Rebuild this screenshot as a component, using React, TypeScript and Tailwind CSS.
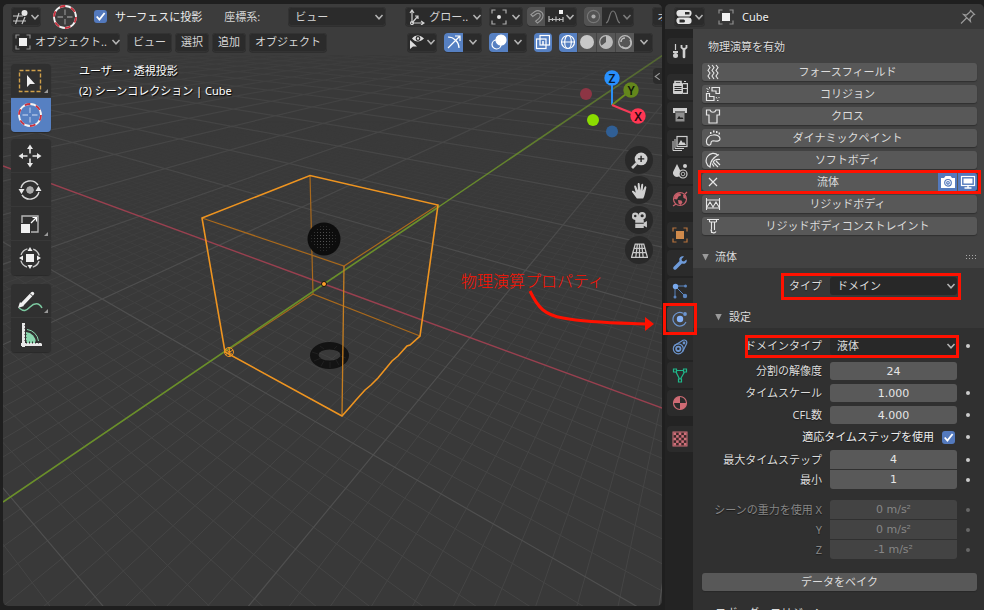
import React, { useId, useState } from "react";
import type { ReactNode } from "react";

const UI = "font-['Noto_Sans','Noto_Sans_CJK_JP',sans-serif]";
const NUM = "font-['DejaVu_Sans','Noto_Sans_CJK_JP',sans-serif]";

/* ---------- small building blocks ---------- */

function Icon({ children, className = "", size = "size-4", box = "0 0 16 16" }: { children: ReactNode; className?: string; size?: string; box?: string }) {
  return (
    <svg viewBox={box} aria-hidden="true" className={`${size} shrink-0 ${className}`} fill="none" stroke="currentColor" strokeWidth="1.2">
      {children}
    </svg>
  );
}

function Chevron({ className = "" }: { className?: string }) {
  return (
    <svg viewBox="0 0 10 8" aria-hidden="true" className={`h-2 w-[10px] shrink-0 text-[#b4b4b4] ${className}`} fill="none" stroke="currentColor" strokeWidth="1.5">
      <path d="M1.5 2 5 5.8 8.5 2" />
    </svg>
  );
}

function Check({ id, label }: { id: string; label?: string }) {
  const [on, setOn] = useState(true);
  return (
    <span className="relative flex size-[13px] shrink-0">
      <input id={id} aria-label={label} type="checkbox" checked={on} onChange={() => setOn(!on)} className="peer size-[13px] appearance-none rounded-[3px] bg-[#545454] checked:bg-[#5379bd]" />
      <svg viewBox="0 0 12 12" aria-hidden="true" className="pointer-events-none absolute inset-0 hidden size-[13px] peer-checked:block" fill="none" stroke="#fff" strokeWidth="1.7">
        <path d="M2.5 6 5 8.8 9.8 2.8" />
      </svg>
    </span>
  );
}

function Highlight({ className }: { className: string }) {
  return <span aria-hidden="true" className={`pointer-events-none absolute z-20 border-[3px] border-[#ff1100] ${className}`} />;
}

const ObjectMark = ({ color = "#f0f0f0" }: { color?: string }) => (
  <>
    <path d="M1 4.5V1h3.5M11.500 1H15v3.500M15 11.500V15h-3.500M4.500 15H1v-3.500" stroke="#8e8e8e" strokeWidth="1.2" />
    <rect x="4" y="4" width="8" height="8" fill={color} stroke="none" />
  </>
);

/* ---------- 3D scene ---------- */

const ORIGIN = [324, 284];
const VANISH_X = [-404, 8];
const VANISH_Y = [746, 3];
const STEP_X = 0.0166;
const STEP_Y = 0.0214;

function project(u: number, v: number) {
  const a = STEP_X * u;
  const b = STEP_Y * v;
  const w = 1 + a + b;
  return [(ORIGIN[0] + a * VANISH_X[0] + b * VANISH_Y[0]) / w, (ORIGIN[1] + a * VANISH_X[1] + b * VANISH_Y[1]) / w];
}

function gridPath(major: boolean) {
  const near = 0.28;
  let d = "";
  const limit = major ? 200 : 80;
  for (let i = -60; i <= limit; i++) {
    if (i === 0 || (i % 10 === 0) !== major) continue;
    const ends = [
      [project((near - 1 - STEP_Y * i) / STEP_X, i), project(600, i)],
      [project(i, (near - 1 - STEP_X * i) / STEP_Y), project(i, 600)],
    ];
    for (const [p, q] of ends) d += `M${p[0].toFixed(1)} ${p[1].toFixed(1)}L${q[0].toFixed(1)} ${q[1].toFixed(1)}`;
  }
  return d;
}

const MINOR = gridPath(false);
const MAJOR = gridPath(true);

function Scene() {
  const dots: ReactNode[] = [];
  for (let r = -4; r <= 4; r++)
    for (let c = -4; c <= 4; c++)
      if (r * r + c * c < 18) dots.push(<rect key={`${r},${c}`} x={323 + c * 3} y={238 + r * 3} width="1" height="1" fill="#5a5a5a" opacity={1 - (r * r + c * c) / 26} />);
  return (
    <svg role="img" aria-label="3D scene" className="absolute top-0 left-0 h-[610px] w-[1600px]" viewBox="3 4 1600 610" fill="none">
      <defs>
        <linearGradient id="fadeMinor" gradientUnits="userSpaceOnUse" x1="0" y1="120" x2="0" y2="420">
          <stop offset="0" stopColor="#fff" stopOpacity="0" />
          <stop offset="0.35" stopColor="#fff" stopOpacity="0.4" />
          <stop offset="1" stopColor="#fff" />
        </linearGradient>
        <linearGradient id="fadeMajor" gradientUnits="userSpaceOnUse" x1="0" y1="30" x2="0" y2="300">
          <stop offset="0" stopColor="#fff" stopOpacity="0" />
          <stop offset="0.3" stopColor="#fff" stopOpacity="0.5" />
          <stop offset="1" stopColor="#fff" />
        </linearGradient>
        <linearGradient id="fadeAxis" gradientUnits="userSpaceOnUse" x1="662" y1="56" x2="440" y2="206">
          <stop offset="0" stopColor="#6a8f2a" stopOpacity="0.5" />
          <stop offset="1" stopColor="#6a8f2a" />
        </linearGradient>
        <mask id="minorMask"><rect x="0" y="0" width="1700" height="700" fill="url(#fadeMinor)" /></mask>
        <mask id="majorMask"><rect x="0" y="0" width="1700" height="700" fill="url(#fadeMajor)" /></mask>
      </defs>
      <path d={MINOR} stroke="#454545" mask="url(#minorMask)" />
      <path d={MAJOR} stroke="#4f4f4f" strokeWidth="1.2" mask="url(#majorMask)" />
      <path d="M3 166 324 284 1600 752" stroke="#98404f" strokeWidth="1.4" />
      {/* back edges of the domain */}
      <g stroke="#a9691c" strokeWidth="1.2">
        <path d="M310 175 313 294 420 336M313 294 225 352M202 218 344 266 438 205" />
      </g>
      <circle cx="324" cy="239" r="16.500" fill="#0d0d0d" />
      {dots}
      <path fillRule="evenodd" fill="#131313" d="M310 355.500a19.500 13.500 0 1 0 39 0a19.500 13.500 0 1 0-39 0ZM318.500 355a11 5.500 0 1 1 22 0a11 5.500 0 1 1-22 0Z" />
      <path d="M312 352l6 2M314 361l7-3M321 366l3-5M330 368v-6M339 365l-3-5M346 358l-6-2M320 346l4 3M337 346l-3 3" stroke="#202020" strokeWidth="1" />
      <path d="M3 502 324 284 440 206" stroke="#6a8f2a" strokeWidth="1.600" />
      <path d="M440 206 740 3" stroke="url(#fadeAxis)" strokeWidth="1.500" />
      <path d="M344 266 342 416" stroke="#c67e20" strokeWidth="1.300" />
      <path d="M342 416 225 352 202 218 310 175.500 438 205 420 336 410 345 407 346 398 356 392 361 378 378 371 385 365 390 356 400 350 407Z" stroke="#ee9420" strokeWidth="1.600" />
      <g stroke="#ee9420" strokeWidth="1"><circle cx="229" cy="352" r="4.500" /><path d="m225 349 8 6M229 347l1 10M225 355l8-5" /></g>
      <circle cx="324" cy="284" r="2.500" fill="#ffa02a" stroke="#111" />
      {/* call-out arrow */}
      <path d="M530 291C538 308 545 315 563 318C590 323 620 323 647 324" stroke="#ff1100" strokeWidth="3" />
      <path d="M645 317 654 324 645 331Z" fill="#ff1100" />
    </svg>
  );
}

function AxisGizmo() {
  return (
    <svg role="img" aria-label="View axes" viewBox="576 66 72 74" className="h-[74px] w-[72px]" fontSize="12" fontFamily="'Noto Sans',sans-serif" fontWeight="600" textAnchor="middle">
      <g strokeWidth="2">
        <path d="M612 105V84" stroke="#2a8df5" /><path d="M612 105 626 94" stroke="#6a8c1e" /><path d="m612 105 22 9" stroke="#f63a57" />
      </g>
      <circle cx="586" cy="94" r="6" fill="#8d3544" /><circle cx="593" cy="120" r="6" fill="#8bdc00" /><circle cx="612" cy="131.500" r="6" fill="#305f95" />
      <circle cx="612" cy="78" r="7.700" fill="#2890ff" /><circle cx="631" cy="90" r="7.700" fill="#64871c" /><circle cx="638" cy="116" r="7.700" fill="#ff3653" />
      <text x="612" y="82.500" fill="#0a1a2e">Z</text><text x="631" y="94.500" fill="#10180a">Y</text><text x="638" y="120.500" fill="#2a0a10">X</text>
    </svg>
  );
}

/* ---------- viewport header ---------- */

const box = "flex h-[19px] shrink-0 items-center rounded-[4px] bg-[#2b2b2b] shadow-[0_1px_0_#2f2f2f,inset_0_0_0_1px_#333]";
const cell = "flex h-[19px] items-center justify-center";

function CursorIcon({ big = false }: { big?: boolean }) {
  return (
    <svg viewBox="0 0 26 26" aria-hidden="true" className="size-[26px] shrink-0" fill="none" strokeWidth="1.800">
      <circle cx="13" cy="13" r="11" stroke="#f2f2f2" />
      <circle cx="13" cy="13" r="11" stroke="#c9303e" strokeDasharray="5.760" />
      <path d="M13 5.500V11M13 15v5.500M5.500 13H11M15 13h5.500" stroke={big ? "#a9bfe4" : "#8a8a8a"} strokeWidth="1.300" />
    </svg>
  );
}

function HeaderRowOne() {
  const cb = useId();
  const cs = useId();
  return (
    <div className="flex h-[25px] items-center pl-2">
      <button aria-label="エディタータイプ" className={`${box} w-[30px] justify-center gap-px`}>
        <Icon className="text-[#c6c6c6]"><path d="M0 7h10M0 12h13M6 4 2.500 15M12 8l-3 7" /><circle cx="11.500" cy="4" r="3" fill="#e4e4e4" stroke="none" /></Icon>
        <Chevron />
      </button>
      <span className="ml-[11px] flex shrink-0"><CursorIcon /></span>
      <span className="ml-4 flex shrink-0 items-center gap-2"><Check id={cb} /><label htmlFor={cb} className="text-[#eee]">サーフェスに投影</label></span>
      <label htmlFor={cs} className="ml-[22px] shrink-0">座標系:</label>
      <span className="relative ml-7 flex shrink-0 items-center">
        <select id={cs} className={`${box} w-[98px] appearance-none pl-[7px]`}><option>ビュー</option></select>
        <Chevron className="pointer-events-none absolute right-[2px]" />
      </span>
      <button className={`${box} ml-[19px] w-[77px] gap-1 pl-1`}>
        <Icon className="text-[#d0d0d0]"><path d="M3 14V2M1 4l2-3 2 3M3 14h11M12 12l3 2-3 2M3 14 9 7M6 7h3v3" /><circle cx="3" cy="14" r="1.500" /></Icon>
        グロー..<Chevron className="mr-px ml-auto" />
      </button>
      <button aria-label="ピボットポイント" className={`${box} ml-[7px] w-[34px] justify-center gap-1`}>
        <Icon className="text-[#b0b0b0]"><path d="M1 4.500V1h3.500M11.500 1H15v3.500M15 11.500V15h-3.500M4.500 15H1v-3.500" /><circle cx="8" cy="8" r="2" fill="#e6e6e6" stroke="none" /></Icon>
        <Chevron />
      </button>
      <span className={`${box} ml-1 w-[50px] overflow-hidden`}>
        <button aria-label="スナップ" className={`${cell} w-[18px] bg-[#525252]`}>
          <Icon className="text-[#9a9a9a]" size="size-[15px]"><path d="M2 6 6 3C10 0 15 3 15 7c0 3-3 6-6 8l-2-2c3-2 5-4 5-6 0-2-2-3-4-2L4 8Z" /></Icon>
        </button>
        <button aria-label="スナップ対象" className={`${cell} flex-1`}>
          <Icon className="text-[#b9b9b9]"><path d="M1 7v6M15 8v5M1 10.500h14M4.500 9v3M8 7.500v5M11.500 9v3" /><rect x="11" y="1" width="4" height="4" fill="#eee" stroke="none" /></Icon>
          <Chevron className="ml-px" />
        </button>
      </span>
      <span className={`${box} ml-[7px] w-[50px] overflow-hidden`}>
        <button aria-label="プロポーショナル編集" className={`${cell} w-[18px] bg-[#525252]`}>
          <Icon className="text-[#777]" size="size-[15px]"><circle cx="8" cy="8" r="6.500" /><circle cx="8" cy="8" r="2.200" fill="#aaa" stroke="none" /></Icon>
        </button>
        <button aria-label="減衰" className={`${cell} flex-1 gap-px opacity-60`}>
          <Icon className="text-[#aaa]"><path d="M1 14c4-1 3-12 7-12s3 11 7 12" /></Icon><Chevron />
        </button>
      </span>
      <button className={`${box} ml-[18px] w-[66px] pl-[5px]`}>オプション</button>
    </div>
  );
}

function HeaderRowTwo() {
  const blue = "bg-[#5680c2] text-white";
  return (
    <div className="flex h-[26px] items-center pr-[9px] pl-2">
      <button className={`${box} ml-px w-[108px] gap-[4px] pl-[3px]`}>
        <Icon><ObjectMark /></Icon>オブジェクト..<Chevron className="mr-px ml-auto" />
      </button>
      <nav className="ml-[7px] flex gap-[3px]">
        {["ビュー", "選択", "追加"].map((t) => <button key={t} className={`${box} px-[6px]`}>{t}</button>)}
        <button className={`${box} px-[6px]`}>オブジェクト</button>
      </nav>
      <div className="ml-auto flex items-center gap-[7px]">
        <button aria-label="表示対象" className={`${box} w-[30px] justify-center gap-px`}>
          <Icon className="text-[#ddd]"><path d="M3 4.500C6 .5 11 .5 15 4.500c-4 4-9 4-12 0Z" fill="#ddd" stroke="none" /><circle cx="9" cy="4.500" r="1.800" stroke="#2b2b2b" fill="none" /><path d="M1 6v9l3-2.500h4Z" fill="#ddd" stroke="none" /></Icon><Chevron />
        </button>
        <span className={`${box} overflow-hidden`}>
          <button aria-label="ギズモ" className={`${cell} w-[19px] ${blue}`}><Icon><path d="M2 14 13.500 2.500M9 2h5v5M2 3c6 0 11 5 11 11" /></Icon></button>
          <button aria-label="ギズモ設定" className={`${cell} w-[19px]`}><Chevron /></button>
        </span>
        <span className={`${box} overflow-hidden`}>
          <button aria-label="オーバーレイ" className={`${cell} w-[19px] ${blue}`}><Icon><circle cx="10" cy="6" r="5" fill="#fff" /><circle cx="5.500" cy="10.500" r="4.500" fill="#5680c2" /><path d="M5 6a5 5 0 0 0 5 5 4.500 4.500 0 0 0-5-5Z" fill="#fff" /></Icon></button>
          <button aria-label="オーバーレイ設定" className={`${cell} w-[19px]`}><Chevron /></button>
        </span>
        <button aria-label="透過表示" className={`${cell} w-[18px] rounded-[4px] ${blue}`}><Icon><rect x="5" y="1.500" width="9.500" height="9.500" /><rect x="1.500" y="5" width="9.500" height="9.500" /><path d="M8 7v4" strokeWidth="1.500" /></Icon></button>
        <span className={`${box} overflow-hidden`}>
          <button aria-label="ワイヤーフレーム" className={`${cell} w-[18px] ${blue}`}><Icon><circle cx="8" cy="8" r="6.500" /><ellipse cx="8" cy="8" rx="3.300" ry="6.500" /><path d="M1.500 8h13" /></Icon></button>
          <button aria-label="ソリッド" className={`${cell} w-[19px] border-l border-[#444] bg-[#565656]`}><Icon><circle cx="8" cy="8" r="7" fill="#c8c8c8" stroke="none" /></Icon></button>
          <button aria-label="マテリアルプレビュー" className={`${cell} w-[19px] border-l border-[#444] bg-[#565656] text-[#bbb]`}><Icon><circle cx="8" cy="8" r="6.300" /><path d="M8 8V1.700A6.300 6.300 0 0 1 14.300 8ZM8 8l-5 4A6.300 6.300 0 0 0 14.300 8Z" fill="#bbb" stroke="none" /></Icon></button>
          <button aria-label="レンダー" className={`${cell} w-[19px] border-l border-[#444] bg-[#565656] text-[#bbb]`}><Icon><circle cx="8" cy="8" r="6.300" /><path d="M13 6a5 5 0 0 1-8 6.500M4 8a4 4 0 0 1 4-4" strokeWidth="1.600" /></Icon></button>
          <button aria-label="シェーディング設定" className={`${cell} w-[19px]`}><Chevron /></button>
        </span>
      </div>
    </div>
  );
}

/* ---------- toolbar ---------- */

const more = <span aria-hidden="true" className="absolute right-[3px] bottom-1 size-1 bg-[#999] [clip-path:polygon(100%_0,100%_100%,0_100%)]" />;

function Tool({ label, children, active = false, menu = false }: { label: string; children: ReactNode; active?: boolean; menu?: boolean }) {
  return (
    <button aria-label={label} className={`relative flex h-[34px] w-10 items-center justify-center border-b border-[#383838] pr-[2px] last:border-0 ${active ? "bg-[#5680c2]" : "bg-[#303030]"}`}>
      {children}
      {menu && more}
    </button>
  );
}

function Toolbar() {
  const group = "overflow-hidden rounded-[4px] shadow-[0_1px_1px_#2a2a2a]";
  return (
    <div className="relative ml-2 w-10 pt-[9px]">
      <div className={group}>
        <Tool label="選択" menu>
          <Icon size="size-6" box="0 0 24 24"><rect x="1.500" y="1.500" width="21" height="21" stroke="#d0a04a" strokeDasharray="4 2" strokeWidth="1.400" /><path d="M9 6v12l3-3h5Z" fill="#f0f0f0" stroke="none" /></Icon>
        </Tool>
        <Tool label="カーソル" active><CursorIcon big /></Tool>
      </div>
      <div className={`mt-[7px] ${group}`}>
        <Tool label="移動">
          <Icon size="size-6" box="0 0 24 24" className="text-[#e8e8e8]"><path d="M12 5v4.500M12 14.500V19M5 12h4.500M14.500 12H19" strokeWidth="1.600" /><path d="M12 .5 15 5H9ZM12 23.500 15 19H9ZM.5 12 5 9v6ZM23.500 12 19 9v6Z" fill="#e8e8e8" stroke="none" /></Icon>
        </Tool>
        <Tool label="回転">
          <Icon size="size-6" box="0 0 24 24" className="text-[#d8d8d8]"><path d="M3 10A9.500 9.500 0 0 1 20 7M21 14A9.500 9.500 0 0 1 4 17" strokeWidth="1.400" /><path d="M.5 11h6L3.500 16ZM17.500 13h6L20.500 8Z" fill="#e8e8e8" stroke="none" /><path d="m12 8 2.800 1.200L16 12l-1.200 2.800L12 16l-2.800-1.200L8 12l1.200-2.800Z" fill="#aaa" stroke="none" /></Icon>
        </Tool>
        <Tool label="スケール" menu>
          <Icon size="size-6" box="0 0 24 24" className="text-[#b5b5b5]"><path d="M4 11V4h16v16h-7" strokeWidth="1.400" /><path d="m13 11 5-5M14.500 5.500H18.500V9.500" stroke="#fff" /><rect x="3" y="12" width="9" height="9" fill="#f0f0f0" stroke="none" /></Icon>
        </Tool>
        <Tool label="トランスフォーム">
          <Icon size="size-6" box="0 0 24 24" className="text-[#c8c8c8]"><circle cx="12" cy="12" r="9.500" strokeDasharray="9 5.920" strokeDashoffset="-3" strokeWidth="1.400" /><rect x="8" y="8" width="8" height="8" fill="#f0f0f0" stroke="none" /><path d="M12 1 14.500 5h-5ZM12 23l2.500-4h-5ZM1 12l4-2.500v5ZM23 12l-4-2.500v5Z" fill="#f0f0f0" stroke="none" /></Icon>
        </Tool>
      </div>
      <div className={`mt-[9px] ${group}`}>
        <Tool label="アノテート" menu>
          <Icon size="size-[26px]" box="0 0 26 26"><path d="M2 20c5 4 7 3 11-1s9-5 12 1" stroke="#7cc9a0" strokeWidth="1.500" /><path d="M5.500 16 15.500 5.500" stroke="#f0f0f0" strokeWidth="3.500" strokeLinecap="round" /><path d="m1 20 2-6 4 4Z" fill="#f0f0f0" stroke="none" /><path d="m13 5.500 3.500 3.500" stroke="#303030" strokeWidth="1" /></Icon>
        </Tool>
        <Tool label="計測">
          <Icon size="size-[26px]" box="0 0 26 26"><path d="M9 21V10a11 11 0 0 1 10 11Z" fill="#8ad6ae" stroke="none" /><path d="M10 7.500A13 13 0 0 1 21.500 19" stroke="#8ad6ae" strokeWidth="1" /><path d="M6.500 1v24M4 22.500h21" stroke="#e8e8e8" strokeWidth="3" /><path d="M8.500 3v18M9 20.500h16" stroke="#303030" strokeWidth="2" strokeDasharray="1 2" /></Icon>
        </Tool>
      </div>
    </div>
  );
}

const navButtons: [string, ReactNode][] = [
  ["ズーム", <><circle cx="9.500" cy="6.500" r="6" fill="#d0d0d0" stroke="none" /><path d="M5.500 10.500 1 15" strokeWidth="2.500" /><path d="M9.500 3.500v6M6.500 6.500h6" stroke="#222" strokeWidth="1.300" /></>],
  ["移動", <path key="p" d="M5.500 15.500 1 9.500c-.5-1 .5-1.800 1.500-1L4.500 10 3 4.500c-.2-1.400 1.500-1.600 1.900-.3L6.500 8 6.300 2c0-1.500 1.800-1.500 1.900 0L8.700 8l1-5.500c.3-1.400 1.900-1 1.800.3L11 8.500l1.700-3.800c.6-1.200 2-.5 1.700.7C13.500 9 13 13 11.500 15.500Z" fill="#d0d0d0" stroke="none" />],
  ["カメラ", <><path fillRule="evenodd" d="M1 3.500a3 3 0 0 1 6 0 3.500 3.500 0 0 1 7 0 3.500 3.500 0 0 1-3 3.500h1v3l3-1.500v6L12 13v2H4V7.500A3.500 3.500 0 0 1 1 3.500Z" fill="#c8c8c8" stroke="none" /><circle cx="4" cy="3.800" r="1.200" fill="#292929" stroke="none" /><circle cx="10.500" cy="3.500" r="1.500" fill="#292929" stroke="none" /><path d="M3 10.500h9" stroke="#292929" strokeWidth="1" /></>],
  ["投影切替", <path key="p" d="M4 2h8l3.500 12.500H.5ZM3 6h10M2 10h12M8 2v12.500M6 2 4.500 14.500M10 2l1.500 12.500" />],
];

function Viewport() {
  return (
    <main className="relative mb-1 flex min-w-0 flex-1 flex-col overflow-hidden rounded-[5px] bg-[#393939]">
      <Scene />
      <header className="relative flex h-[51px] flex-col bg-[#3c3c3c]/95 whitespace-nowrap text-[#d5d5d5]">
        <HeaderRowOne />
        <HeaderRowTwo />
      </header>
      <div className="relative flex">
        <Toolbar />
        <div className="mt-[6px] ml-7 leading-5 text-white [text-shadow:1px_1px_1px_#000]">
          <p>ユーザー・透視投影</p>
          <p>(2) シーンコレクション | Cube</p>
        </div>
        <div className="mt-[11px] ml-auto flex flex-col items-end">
          <div className="mr-[14px]"><AxisGizmo /></div>
          <div className="mt-[6px] mr-[9px] flex flex-col gap-[2px]">
            {navButtons.map(([l, i]) => (
              <button key={l} aria-label={l} className="flex size-[28px] items-center justify-center rounded-full bg-[#292929]">
                <Icon className="text-[#c8c8c8]" size="size-[17px]">{i}</Icon>
              </button>
            ))}
          </div>
        </div>
        <button aria-label="サイドバー" className="absolute top-[13px] right-0 flex h-4 w-[9px] items-center justify-center rounded-l-[4px] bg-[#2b2b2b] text-[#999]">
          <svg viewBox="0 0 6 8" className="h-[9px] w-[7px]" fill="none" stroke="currentColor"><path d="M5 1 1 4l4 3" /></svg>
        </button>
      </div>
      <p className="absolute top-[265px] left-[458px] text-[16px] leading-6 font-light whitespace-nowrap text-[#ff1100]">物理演算プロパティ</p>
    </main>
  );
}

/* ---------- properties editor ---------- */

const tabs: { label: string; icon: ReactNode; color: string; gap?: boolean; active?: boolean }[] = [
  { label: "ツール", color: "text-[#d0d0d0]", icon: <><path d="M3.500 1v6" strokeWidth="1.200" /><rect x="1" y="8" width="5" height="2" fill="currentColor" stroke="none" /><circle cx="3.500" cy="12.500" r="2.500" fill="currentColor" stroke="none" /><path d="M9.500 2v2.500L12 6.500l2.500-2V2" strokeWidth="1.800" /><path d="M12 6.500v7.500" strokeWidth="2.600" strokeLinecap="round" /></> },
  { label: "レンダー", gap: true, color: "text-[#cfcfcf]", icon: <><path d="M3 5V2.500h6V5" strokeWidth="1.600" /><rect x="1" y="4" width="10" height="11" rx="1" fill="currentColor" stroke="none" /><path d="M2.500 7.500h7M2.500 9.500h7M2.500 11.500h7" stroke="#2b2b2b" /><path d="M11 4.600h4.400v9.800H11M11 9.500h4.400M12 2.500h2" /></> },
  { label: "出力", color: "text-[#cfcfcf]", icon: <><path d="M1 1h14v5H1Z" fill="currentColor" stroke="none" /><path d="M3.500 6v8.500h9V6" fill="#8f8f8f" stroke="none" /><path d="m5 12 2-3 2 2 1-1 1.500 2Z" fill="#222" stroke="none" /><path d="M3 5h10" stroke="#2b2b2b" /></> },
  { label: "ビューレイヤー", color: "text-[#cfcfcf]", icon: <><rect x="5" y="1.500" width="10" height="10" /><path d="M3 4v9.500h9M1 6v9.500h9" strokeWidth="1" /><path d="m6 10 3-5 2 3 1-1 2 3Z" fill="currentColor" stroke="none" /></> },
  { label: "シーン", color: "text-[#cfcfcf]", icon: <><path d="M5 1 8.500 8A4 4 0 1 1 1.500 8Z" fill="currentColor" stroke="none" /><circle cx="13" cy="3" r="2" fill="currentColor" stroke="none" /><circle cx="11" cy="11" r="4" fill="#2b2b2b" stroke="currentColor" /><circle cx="11" cy="11" r="1.800" strokeWidth=".8" /></> },
  { label: "ワールド", color: "text-[#c9606b]", icon: <><circle cx="8" cy="8" r="6.500" /><path d="m2.500 5 3-3 3 .5.500 2-2.500 1L5 8.500 2 8ZM11 3.500l2.500 1L14 8l-2.500-1ZM6 9l3.500.5 1 2L8.500 14l-2-1.500Z" fill="currentColor" stroke="none" /><path d="m1 15 3-2M13 3l2-2" /></> },
  { label: "オブジェクト", gap: true, color: "text-[#b8733d]", icon: <><path d="M1 4.500V1h3.500M11.500 1H15v3.500M15 11.500V15h-3.500M4.500 15H1v-3.500" /><rect x="4" y="4" width="8" height="8" fill="#d08a4b" stroke="none" /></> },
  { label: "モディファイアー", color: "text-[#6f9bd9]", icon: <path d="M14.500 4.500 12 6.500 10 6l-.5-2L12 1.500C9 .5 6.500 3 7.500 6L1.500 12a1.800 1.800 0 0 0 2.500 2.500l6-6c3 1 5.500-1 4.500-4Z" fill="currentColor" stroke="none" /> },
  { label: "パーティクル", color: "text-[#5b84bd]", icon: <><path d="M3 3h10M3 3v10M3 3l10 10" strokeWidth="1" /><circle cx="3.500" cy="3.500" r="2.700" fill="#78a8ec" stroke="none" /><circle cx="13.500" cy="3" r="1.500" fill="currentColor" stroke="none" /><circle cx="3" cy="14" r="1.500" fill="currentColor" stroke="none" /><circle cx="13" cy="13" r="2.200" fill="currentColor" stroke="none" /></> },
  { label: "物理演算", active: true, color: "text-[#6c95cf]", icon: <><path d="M11 2.200A6.800 6.800 0 1 0 14 11" /><circle cx="8" cy="8" r="3.200" fill="#86b4fa" stroke="none" /><circle cx="13" cy="3" r="1.900" fill="currentColor" stroke="none" /></> },
  { label: "コンストレイント", color: "text-[#6c95cf]", icon: <><path d="M2.500 6.500 11 1.300c2.500-1 4.500 1 3.500 3.500L10.500 13" /><circle cx="6.300" cy="9.800" r="5" /><circle cx="6.300" cy="9.800" r="2.200" strokeWidth="1.800" /><circle cx="12" cy="4" r=".8" /></> },
  { label: "データ", color: "text-[#1fb78a]", icon: <path d="M1.500 2h3v3h-3ZM11.500 2h3v3h-3ZM6.500 12h3v3h-3ZM4.500 3.500h7M4 5l3.500 7M12.500 5 8.500 12" /> },
  { label: "マテリアル", color: "text-[#cf6b74]", icon: <><circle cx="8" cy="8" r="6.500" /><path d="M8 8V1.500A6.500 6.500 0 0 0 1.500 8ZM8 8h6.500A6.500 6.500 0 0 1 8 14.500Z" fill="currentColor" stroke="none" /></> },
  { label: "テクスチャ", gap: true, color: "text-[#d0707a]", icon: <><rect x="1" y="1" width="14" height="14" fill="#3a2628" stroke="currentColor" strokeWidth="1" />{[0, 1, 2, 3, 4].flatMap((r) => [0, 1, 2, 3, 4].filter((c) => (r + c) % 2 === 0).map((c) => <rect key={`${r}${c}`} x={1.500 + c * 2.600} y={1.500 + r * 2.600} width="2.600" height="2.600" fill="currentColor" stroke="none" />))}</> },
];

function Tabs() {
  return (
    <nav aria-label="プロパティ" className="flex w-7 shrink-0 flex-col gap-[2px] bg-[#232323] pt-[9px] pl-[2px]">
      {tabs.map((t) => (
        <button key={t.label} aria-label={t.label} className={`relative flex h-[26px] shrink-0 items-center justify-center rounded-l-[4px] ${t.gap ? "mt-2" : ""} ${t.active ? "bg-[#424242]" : "bg-[#2b2b2b]"} ${t.color}`}>
          <Icon>{t.icon}</Icon>
          {t.active && <Highlight className="-inset-x-1 -inset-y-[3px]" />}
        </button>
      ))}
    </nav>
  );
}

const physics: { label: string; icon: ReactNode; on?: boolean }[] = [
  { label: "フォースフィールド", icon: <path d="m3 1 2 2.500-2 3L5 9l-2 3 2 3M7 1l2 2.500-2 3L9 9l-2 3 2 3M11 1l2 2.500-2 3 2 2.500-2 3 2 3" strokeWidth="1.100" /> },
  { label: "コリジョン", icon: <><path d="M7 1.500h7.500v6H11V5H7ZM1.500 7.500h3v3H9v4H1.500Z" /><path d="m1.500 2.500 2 1M4.500 1v1.500M2 5.500h1.500M11 11l1 1.500M14.500 11l-1 1M12 14.500h1.500" strokeWidth="1" /></> },
  { label: "クロス", icon: <path d="M1.500 2H5c1 3 5 3 6 0h3.500v5H12v8H4V7H1.500Z" /> },
  { label: "ダイナミックペイント", icon: <><path d="M2 14C0 9 4 5 8 5c4-.5 7 1 7 4 0 2-3 2.500-5 2s-4 0-4 2-2 3-4 1Z" /><path d="M5 3h1.500M8 1.500h1.500M11 2h1.500M13.500 3.500H15" strokeWidth="1.800" /></> },
  { label: "ソフトボディ", icon: <><path d="M13 3.500C10 0 5 1 2.500 4.500S1 13 5 15C5 9 9 5 14 2.500" /><path d="M8 10c2-3 4-3 7-2.500M8 10l5 5M9 14.500l-2-3M11 9l4 4" /></> },
  { label: "流体", on: true, icon: <path d="m4 4 8 8M12 4l-8 8" /> },
  { label: "リジッドボディ", icon: <path d="M1.500 2v12M14.500 2v12M1.500 4h13M1.500 12h13M2 11l3-5 3 5 3-5 3 5" strokeWidth="1.100" /> },
  { label: "リジッドボディコンストレイント", icon: <path d="M2 1.500h12M4.500 4h7M4.500 1.500V4M11.500 1.500V4M6.500 4v7a2.500 2.500 0 0 0 4.500 2.500M9.500 4v8M6.500 12v3" strokeWidth="1.100" /> },
];

function PhysicsList() {
  return (
    <ul className="mt-[7px] flex flex-col gap-1">
      {physics.map((p) => (
        <li key={p.label} className="relative flex h-[18px] rounded-[3px] bg-[#585858] shadow-[0_1px_1px_#303030]">
          <button className="relative flex min-w-0 flex-1 items-center">
            <Icon className="ml-[3px] text-[#e6e6e6]">{p.icon}</Icon>
            <span className="flex-1 pr-[3px] text-center leading-[18px]">{p.label}</span>
          </button>
          {p.on && (
            <>
              <button aria-label="レンダー表示" className="flex w-[19px] items-center justify-center bg-[#5379bd] text-white">
                <Icon><path d="M1 4h3l1.500-2h5L12 4h3v10H1Z" fill="#fff" stroke="none" /><circle cx="8" cy="8.800" r="3.300" stroke="#5379bd" fill="#fff" /><circle cx="8" cy="8.800" r="1.300" stroke="#5379bd" /></Icon>
              </button>
              <button aria-label="ビューポート表示" className="ml-px flex w-[19px] items-center justify-center rounded-r-[3px] bg-[#5379bd] text-white">
                <Icon><rect x="1.500" y="2.500" width="13" height="9" /><rect x="3.500" y="4.500" width="9" height="5" fill="#fff" stroke="none" /><path d="M8 11v3M4.500 14h7" strokeWidth="1.400" /></Icon>
              </button>
              <Highlight className="-inset-x-[4px] -inset-y-[3px]" />
            </>
          )}
        </li>
      ))}
    </ul>
  );
}

function Row({ label, dot = true, dim = false, children, h = "h-[18px]" }: { label: ReactNode; dot?: boolean; dim?: boolean; children: ReactNode; h?: string }) {
  return (
    <div className={`relative flex items-center ${h} ${dim ? "text-[#868686]" : ""}`}>
      <div className="flex min-w-0 flex-1 justify-end whitespace-nowrap">{label}</div>
      <div className="ml-2 flex w-[127px]">{children}</div>
      <div className="mr-[5px] flex w-[22px] justify-center">{dot && <span className={`size-1 rounded-full ${dim ? "bg-[#666]" : "bg-[#ccc]"}`} />}</div>
    </div>
  );
}

function Choice({ label, value, dot, mark }: { label: string; value: string; dot: boolean; mark: string }) {
  const id = useId();
  return (
    <Row dot={dot} label={<label htmlFor={id}>{label}</label>}>
      <span className="relative flex w-full items-center">
        <select id={id} className="h-[18px] w-full appearance-none rounded-[3px] bg-[#282828] pl-[7px]"><option>{value}</option></select>
        <Chevron className="pointer-events-none absolute right-px" />
        <Highlight className={mark} />
      </span>
    </Row>
  );
}

function NumberField({ label, value, dot = true, dim = false, shape = "rounded-[3px]", h = "h-[18px]" }: { label: string; value: string; dot?: boolean; dim?: boolean; shape?: string; h?: string }) {
  const id = useId();
  return (
    <Row dot={dot} dim={dim} h={h} label={<label htmlFor={id}>{label}</label>}>
      <input id={id} type="text" defaultValue={value} disabled={dim} className={`w-full text-center ${NUM} ${h} ${shape} ${dim ? "bg-[#434343]" : "bg-[#595959] text-[#e6e6e6]"}`} />
    </Row>
  );
}

const Triangle = () => <span aria-hidden="true" className="block size-[7px] bg-[#9a9a9a] [clip-path:polygon(0_0,100%_0,50%_100%)]" />;

function Properties() {
  const cb = useId();
  return (
    <aside className="flex w-[319px] shrink-0 flex-col rounded-t-[5px] bg-[#383838] text-[#dcdcdc] [text-shadow:0_1px_1px_#0007]">
      <header className="flex h-[25px] shrink-0 items-center pl-[9px]">
        <button aria-label="エディタータイプ" className={`${box} w-[31px] justify-center gap-[2px]`}>
          <Icon className="text-[#e4e4e4]"><rect x="1" y="1.500" width="14" height="5.500" rx="2.700" fill="currentColor" /><rect x="1" y="9" width="14" height="5.500" rx="2.700" fill="currentColor" /><path d="M9 3h4.500v2.500H9Z" fill="#2b2b2b" stroke="none" /><path d="M3.500 10.500h4a1.500 1.500 0 0 1 0 3h-4Z" fill="#2b2b2b" stroke="none" /></Icon>
          <Chevron />
        </button>
        <Icon className="ml-[13px]"><ObjectMark /></Icon>
        <span className="ml-2 text-[#f0f0f0]">Cube</span>
        <button aria-label="ピン" className="mr-2 ml-auto text-[#9a9a9a]"><Icon><path d="m10.500 1.500 4 4-1.500.5-3 3.500.5 3L3.500 5.500l3 .5L10 3ZM6.500 9 1 14.500" /></Icon></button>
      </header>
      <div className="flex min-h-0 flex-1">
        <Tabs />
        <div className="flex min-w-0 flex-1 flex-col bg-[#303030]">
          <section className="bg-[#424242] pt-[9px] pr-[7px] pl-[9px]">
            <h2 className="pl-[6px] leading-[18px]">物理演算を有効</h2>
            <PhysicsList />
            <button className="mt-[11px] flex h-[22px] w-full items-center gap-[6px]">
              <Triangle />流体
              <span aria-hidden="true" className="ml-auto h-[5px] w-[11px] bg-[repeating-linear-gradient(90deg,#aaa_0_1px,transparent_1px_3px)] [mask-image:repeating-linear-gradient(#000_0_1px,transparent_1px_3px)]" />
            </button>
          </section>
          <section className="bg-[#383838] pt-[9px]">
            <Choice label="タイプ" value="ドメイン" dot={false} mark="-top-1 -right-[4px] -bottom-[5px] -left-[49px]" />
            <button className="mt-[11px] flex h-[22px] w-full items-center gap-[7px] pl-[22px]"><Triangle />設定</button>
          </section>
          <section className="pt-[9px]">
            <Choice label="ドメインタイプ" value="液体" dot mark="-top-[2px] -right-[2px] -bottom-[3px] -left-[85px]" />
            <div className="mt-[7px] flex flex-col gap-1">
              <NumberField label="分割の解像度" value="24" dot={false} />
              <NumberField label="タイムスケール" value="1.000" />
              <NumberField label="CFL数" value="4.000" />
              <div className="flex h-[18px] items-center justify-end text-[#eee]">
                <label htmlFor={cb} className="mr-2 whitespace-nowrap">適応タイムステップを使用</label>
                <Check id={cb} />
                <span className="mr-[5px] ml-[2px] flex w-[22px] justify-center"><span className="size-1 rounded-full bg-[#ccc]" /></span>
              </div>
              <div className="flex flex-col gap-px">
                <NumberField h="h-[19px]" label="最大タイムステップ" value="4" shape="rounded-t-[3px]" />
                <NumberField h="h-[19px]" label="最小" value="1" shape="rounded-b-[3px]" />
              </div>
            </div>
            <div className="mt-[11px] flex flex-col gap-px">
              <NumberField h="h-[19px]" dim label="シーンの重力を使用 X" value="0 m/s²" shape="rounded-t-[3px]" />
              <NumberField h="h-[19px]" dim label="Y" value="0 m/s²" shape="" />
              <NumberField h="h-[19px]" dim label="Z" value="-1 m/s²" shape="rounded-b-[3px]" />
            </div>
            <div className="mt-[14px] pr-[7px] pl-[9px]">
              <button className="h-[18px] w-full rounded-[3px] bg-[#585858] shadow-[0_1px_1px_#282828]">データをベイク</button>
            </div>
            <h3 className="mt-[13px] pl-[22px] leading-[18px] whitespace-nowrap">コボーダーコリジョン</h3>
          </section>
        </div>
      </div>
    </aside>
  );
}

export default function App() {
  return (
    <div className={`flex h-screen gap-[3px] overflow-hidden bg-[#1f1f1f] pt-1 pl-[3px] text-[11px] leading-4 text-[#dcdcdc] ${UI}`}>
      <Viewport />
      <Properties />
    </div>
  );
}
